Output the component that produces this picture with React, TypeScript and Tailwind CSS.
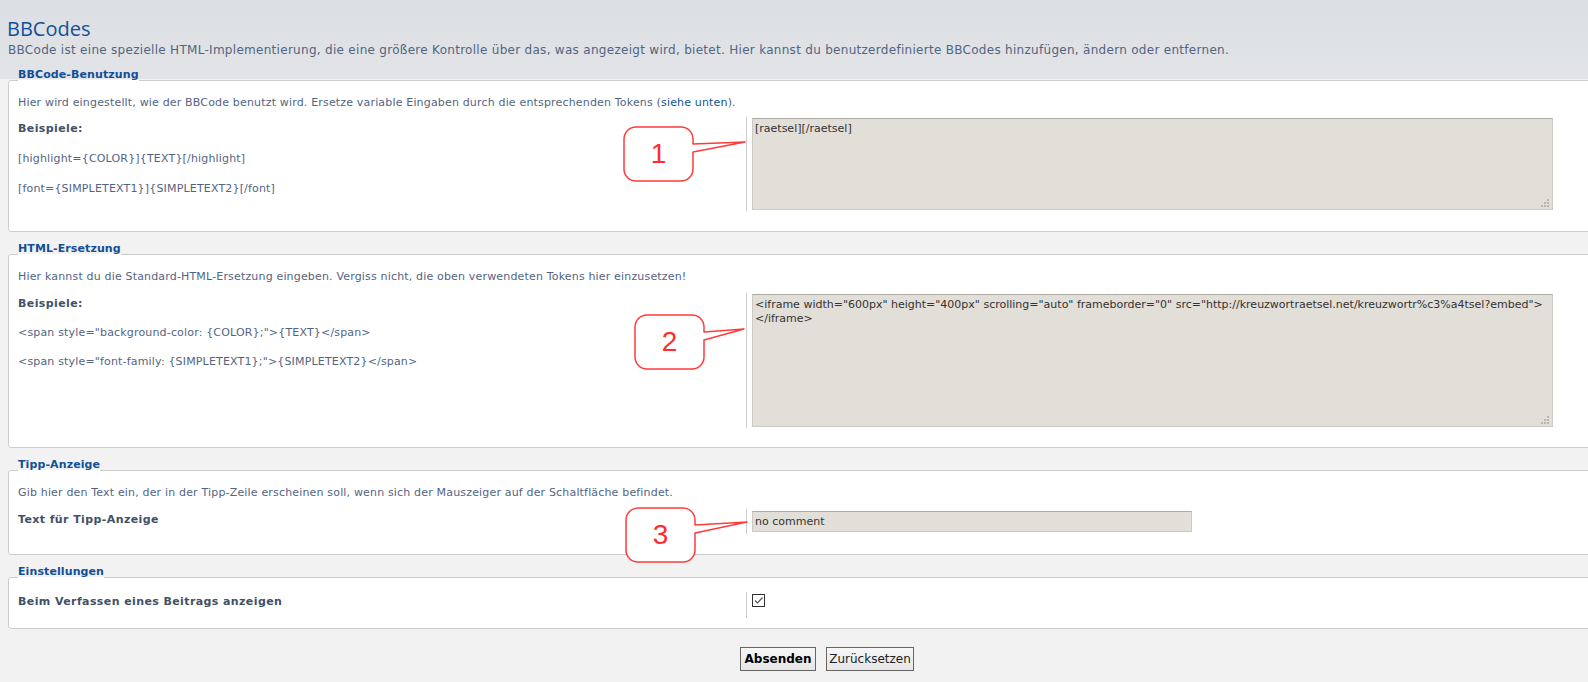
import type { ReactNode } from "react";

// Red numbered callout with a wedge pointing to the right
function Callout({
  n,
  tipX,
  tipY,
  className,
}: {
  n: string;
  tipX: number;
  tipY: number;
  className: string;
}) {
  return (
    <div
      className={`pointer-events-none absolute z-10 h-[57px] w-[126px] ${className}`}
    >
      <svg width="126" height="57" className="absolute left-0 top-0">
        <path
          d={`M13 1H58A12 12 0 0 1 70 13V18L${tipX} ${tipY}L70 26V43A12 12 0 0 1 58 55H13A12 12 0 0 1 1 43V13A12 12 0 0 1 13 1Z`}
          fill="#fff"
          stroke="#ff3b3b"
          strokeWidth="1.5"
          strokeLinejoin="round"
        />
      </svg>
      <span className="absolute left-[1px] top-[1px] flex h-[54px] w-[69px] items-center justify-center font-['Liberation_Sans',Arial,sans-serif] text-[28px] leading-none text-[#ff2d2d]">
        {n}
      </span>
    </div>
  );
}

function Grip() {
  return (
    <svg
      width="8"
      height="8"
      className="pointer-events-none absolute bottom-[3px] right-[4px]"
    >
      <g fill="#b8b5af">
        <rect x="6" y="0" width="2" height="2" />
        <rect x="3" y="3" width="2" height="2" />
        <rect x="6" y="3" width="2" height="2" />
        <rect x="0" y="6" width="2" height="2" />
        <rect x="3" y="6" width="2" height="2" />
        <rect x="6" y="6" width="2" height="2" />
      </g>
    </svg>
  );
}

function Section({
  title,
  children,
}: {
  title: string;
  children: ReactNode;
}) {
  return (
    <fieldset className="mb-[10px] w-[1638px] rounded-[3px] border border-[#cccccc] bg-white px-[9px]">
      <legend className="pb-[10px] text-[11px] font-bold leading-[14px] tracking-[0.1px] text-[#115098]">
        {title}
      </legend>
      {children}
    </fieldset>
  );
}

const field =
  "block resize-none border border-[#cdc9c3] border-t-[#aeaba4] bg-[#e2ded8] px-[2px] text-[11px] leading-[14px] text-[#333] outline-none";

const text = "text-[11px] leading-[15px] tracking-[0.17px]";
const label = "text-[11px] font-bold leading-[15px] tracking-[0.4px] text-[#425067]";

export default function App() {
  return (
    <div className="min-h-screen w-full overflow-hidden bg-[linear-gradient(to_bottom,#dcdfe3_0px,#e2e4e7_79px,#f2f2f2_79px)] font-['DejaVu_Sans',Verdana,sans-serif] text-[#536482]">
      <div className="w-[1660px] pl-2 pt-[17px]">
        <h1 className="ml-[-1px] font-['Open_Sans',sans-serif] text-[20px] font-normal leading-[24px] text-[#115098]">
          BBCodes
        </h1>
        <p className="mt-[1px] text-[12px] leading-[16px] tracking-[0.29px]">
          BBCode ist eine spezielle HTML-Implementierung, die eine größere
          Kontrolle über das, was angezeigt wird, bietet. Hier kannst du
          benutzerdefinierte BBCodes hinzufügen, ändern oder entfernen.
        </p>

        <div className="mt-[10px]">
          {/* Usage */}
          <Section title="BBCode-Benutzung">
            <p className={`mt-[3px] ${text}`}>
              Hier wird eingestellt, wie der BBCode benutzt wird. Ersetze
              variable Eingaben durch die entsprechenden Tokens (
              <a className="text-[#105289]">siehe unten</a>).
            </p>
            <div className="mb-[20px] mt-[7px] flex">
              <div className={`w-[728px] shrink-0 pt-[4px] ${text}`}>
                <p className={label}>Beispiele:</p>
                <p className="mt-[15px]">[highlight={"{COLOR}"}]{"{TEXT}"}[/highlight]</p>
                <p className="mt-[15px]">
                  [font={"{SIMPLETEXT1}"}]{"{SIMPLETEXT2}"}[/font]
                </p>
              </div>
              <div className="relative border-l border-[#cccccc] py-px pl-[5px]">
                <Callout n="1" tipX={122} tipY={16} className="left-[-124px] top-[9px]" />
                <div className="relative">
                  <textarea
                    readOnly
                    defaultValue="[raetsel][/raetsel]"
                    className={`${field} h-[92px] w-[801px] py-[3px]`}
                  />
                  <Grip />
                </div>
              </div>
            </div>
          </Section>

          {/* HTML replacement */}
          <Section title="HTML-Ersetzung">
            <p className={`mt-[3px] ${text}`}>
              Hier kannst du die Standard-HTML-Ersetzung eingeben. Vergiss
              nicht, die oben verwendeten Tokens hier einzusetzen!
            </p>
            <div className="mb-[19px] mt-[9px] flex">
              <div className={`w-[728px] shrink-0 pt-[3px] ${text}`}>
                <p className={label}>Beispiele:</p>
                <p className="mt-[14px]">
                  {'<span style="background-color: {COLOR};">{TEXT}</span>'}
                </p>
                <p className="mt-[14px]">
                  {'<span style="font-family: {SIMPLETEXT1};">{SIMPLETEXT2}</span>'}
                </p>
              </div>
              <div className="relative border-l border-[#cccccc] py-px pl-[5px]">
                <Callout n="2" tipX={110} tipY={15} className="left-[-113px] top-[21px]" />
                <div className="relative">
                  <textarea
                    readOnly
                    defaultValue={
                      '<iframe width="600px" height="400px" scrolling="auto" frameborder="0" src="http://kreuzwortraetsel.net/kreuzwortr%c3%a4tsel?embed">\n</iframe>'
                    }
                    className={`${field} h-[133px] w-[801px] py-[3px]`}
                  />
                  <Grip />
                </div>
              </div>
            </div>
          </Section>

          {/* Tooltip */}
          <Section title="Tipp-Anzeige">
            <p className={`mt-[3px] ${text}`}>
              Gib hier den Text ein, der in der Tipp-Zeile erscheinen soll, wenn
              sich der Mauszeiger auf der Schaltfläche befindet.
            </p>
            <div className="mb-[20px] mt-[9px] flex">
              <div className={`w-[728px] shrink-0 pt-[3px] ${label}`}>
                Text für Tipp-Anzeige
              </div>
              <div className="relative border-l border-[#cccccc] py-[2px] pl-[5px]">
                <Callout n="3" tipX={122} tipY={15} className="left-[-122px] top-[-2px]" />
                <input
                  readOnly
                  defaultValue="no comment"
                  className={`${field} h-[21px] w-[440px]`}
                />
              </div>
            </div>
          </Section>

          {/* Settings */}
          <Section title="Einstellungen">
            <div className="mb-[10px] mt-[3px] flex">
              <div className={`w-[728px] shrink-0 pt-[2px] ${label}`}>
                Beim Verfassen eines Beitrags anzeigen
              </div>
              <div className="border-l border-[#cccccc] pb-[11px] pl-[5px] pt-[2px]">
                <span className="flex h-[13px] w-[13px] items-center justify-center border border-[#333] bg-white">
                  <svg width="11" height="11" viewBox="0 0 11 11">
                    <path
                      d="M2 5.5L4.5 8L9.5 2.5"
                      fill="none"
                      stroke="#555"
                      strokeWidth="1.2"
                    />
                  </svg>
                </span>
              </div>
            </div>
          </Section>

          <div className="mt-[18px] flex w-[1638px] justify-center gap-[10px]">
            <button className="h-[24px] w-[76px] border border-[#666] bg-[linear-gradient(#f7f7f7,#e6e6e6)] text-[12px] font-bold text-black">
              Absenden
            </button>
            <button className="h-[24px] w-[88px] border border-[#666] bg-[linear-gradient(#f7f7f7,#e6e6e6)] text-[12px] text-[#222]">
              Zurücksetzen
            </button>
          </div>
        </div>
      </div>
    </div>
  );
}
